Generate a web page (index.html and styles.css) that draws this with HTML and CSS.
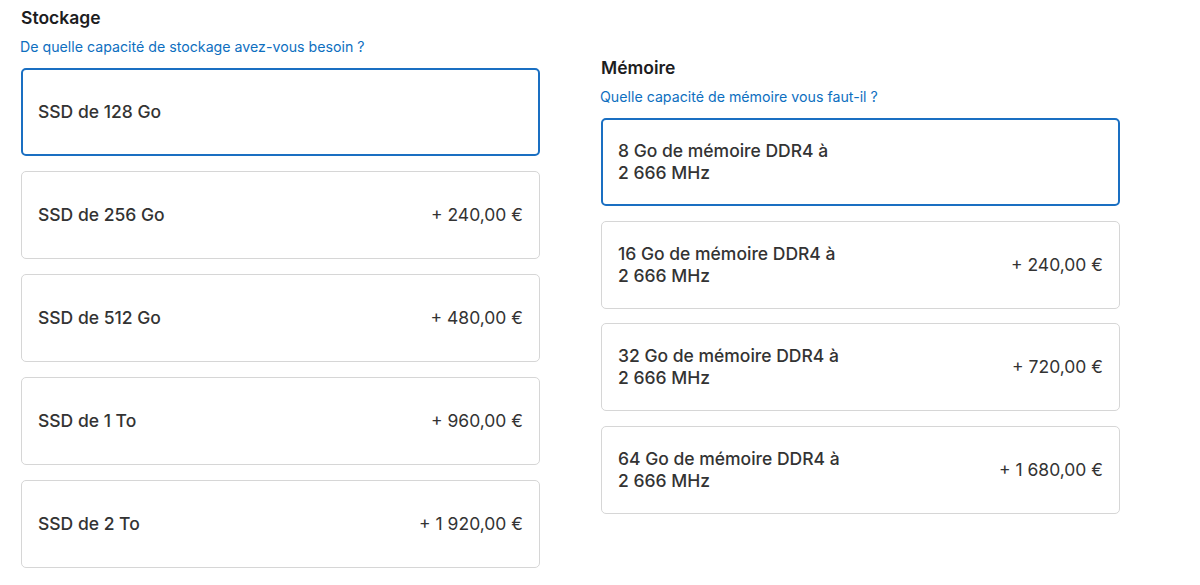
FILE: index.html
```html
<!DOCTYPE html>
<html lang="fr">
<head>
  <meta charset="UTF-8">
  <meta name="viewport" content="width=device-width, initial-scale=1.0">
  <title>Configurer – Stockage et mémoire</title>
  <link rel="stylesheet" href="styles.css">
</head>
<body>

  <div class="config">
    <section class="group" id="storage">
      <h2>Stockage</h2>
      <p class="hint">De quelle capacité de stockage avez-vous besoin ?</p>

      <ul class="options">
        <li class="option selected">
          <span class="label">SSD de 128 Go</span>
        </li>
        <li class="option">
          <span class="label">SSD de 256 Go</span>
          <span class="price">+ 240,00 €</span>
        </li>
        <li class="option">
          <span class="label">SSD de 512 Go</span>
          <span class="price">+ 480,00 €</span>
        </li>
        <li class="option">
          <span class="label">SSD de 1 To</span>
          <span class="price">+ 960,00 €</span>
        </li>
        <li class="option">
          <span class="label">SSD de 2 To</span>
          <span class="price">+ 1&nbsp;920,00 €</span>
        </li>
      </ul>
    </section>

    <section class="group offset" id="memory">
      <h2>Mémoire</h2>
      <p class="hint">Quelle capacité de mémoire vous faut-il ?</p>

      <ul class="options">
        <li class="option selected">
          <span class="label">8 Go de mémoire DDR4 à 2&nbsp;666&nbsp;MHz</span>
        </li>
        <li class="option">
          <span class="label">16 Go de mémoire DDR4 à 2&nbsp;666&nbsp;MHz</span>
          <span class="price">+ 240,00 €</span>
        </li>
        <li class="option">
          <span class="label">32 Go de mémoire DDR4 à 2&nbsp;666&nbsp;MHz</span>
          <span class="price">+ 720,00 €</span>
        </li>
        <li class="option">
          <span class="label">64 Go de mémoire DDR4 à 2&nbsp;666&nbsp;MHz</span>
          <span class="price">+ 1&nbsp;680,00 €</span>
        </li>
      </ul>
    </section>
  </div>

</body>
</html>
```

FILE: styles.css
```css
body {
  font-family: Inter, "Noto Sans", sans-serif;
  background-color: #fff;
  color: #1d1d1f;
  margin: 0;
}

.config {
  display: flex;
  gap: 61px;
  padding: 7px 0 0 21px;
}

.group {
  width: 519px;
}

.group.offset {
  padding-top: 50px;
}

.group h2 {
  font-size: 17.5px;
  font-weight: 600;
  line-height: 22px;
  margin: 0;
}

.hint {
  font-size: 14.2px;
  line-height: 18px;
  color: #0e6fbf;
  margin: 9px 0 0 -1px;
}

.options {
  list-style-type: none;
  padding: 0;
  margin: 12px 0 0;
  display: flex;
  flex-direction: column;
  gap: 15px;
}

#memory .options {
  gap: 14.5px;
}

.option {
  display: flex;
  justify-content: space-between;
  align-items: center;
  box-sizing: border-box;
  height: 88px;
  padding: 0 16px;
  border: 1px solid #d6d6d6;
  border-radius: 5px;
  font-size: 17.5px;
  line-height: 22px;
  color: #333;
}

.option.selected {
  border: 2px solid #1a6fc2;
  padding: 0 15px;
}

.label {
  font-weight: 500;
  max-width: 245px;
}

.price {
  font-weight: 400;
}
```
